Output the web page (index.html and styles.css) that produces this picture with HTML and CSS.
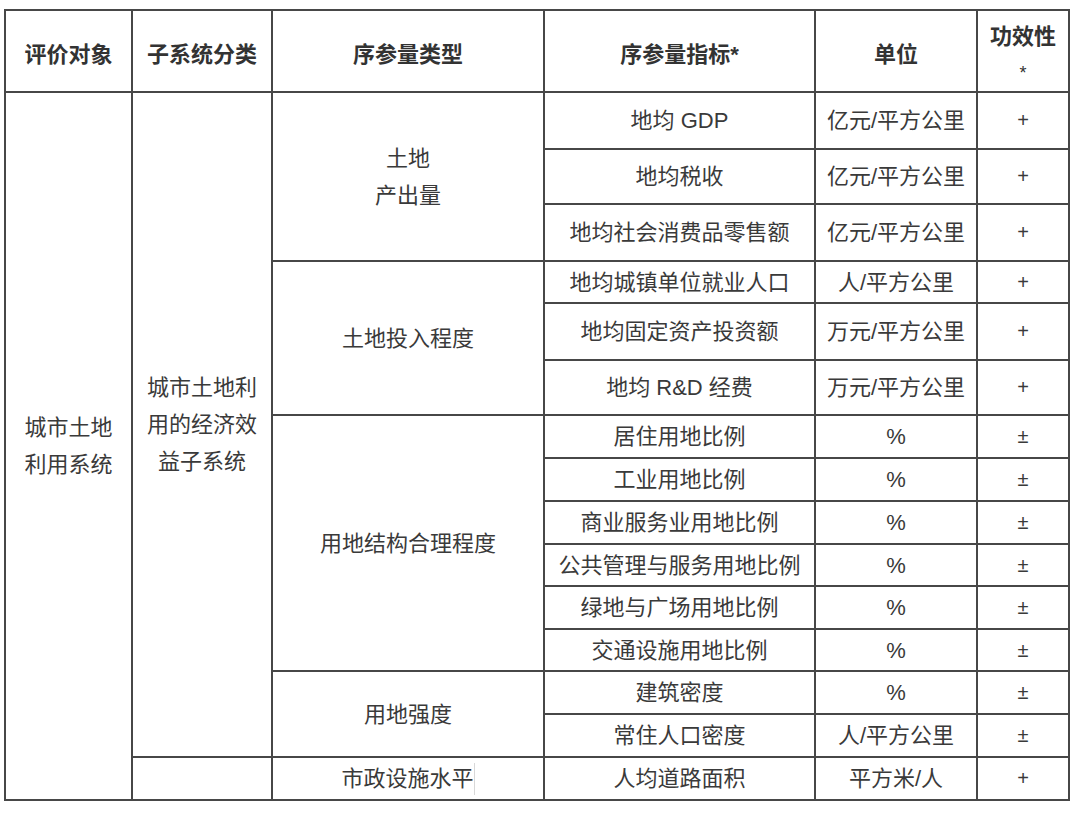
FILE: index.html
```html
<!DOCTYPE html>
<html lang="zh-CN">
<head>
<meta charset="utf-8">
<title>城市土地利用系统序参量</title>
<link rel="stylesheet" href="styles.css">
</head>
<body>
<table class="grid">
  <colgroup>
    <col class="c1"><col class="c2"><col class="c3"><col class="c4"><col class="c5"><col class="c6">
  </colgroup>
  <thead>
    <tr class="h82">
      <th>评价对象</th>
      <th>子系统分类</th>
      <th>序参量类型</th>
      <th>序参量指标*</th>
      <th>单位</th>
      <th>功效性<span class="star">*</span></th>
    </tr>
  </thead>
  <tbody>
    <tr class="h57">
      <td rowspan="15">城市土地利用系统</td>
      <td rowspan="14">城市土地利用的经济效益子系统</td>
      <td rowspan="3">土地<br>产出量</td>
      <td>地均 GDP</td>
      <td>亿元/平方公里</td>
      <td class="sign">+</td>
    </tr>
    <tr class="h55">
      <td>地均税收</td>
      <td>亿元/平方公里</td>
      <td class="sign">+</td>
    </tr>
    <tr class="h57">
      <td>地均社会消费品零售额</td>
      <td>亿元/平方公里</td>
      <td class="sign">+</td>
    </tr>
    <tr class="h42">
      <td rowspan="3">土地投入程度</td>
      <td>地均城镇单位就业人口</td>
      <td>人/平方公里</td>
      <td class="sign">+</td>
    </tr>
    <tr class="h57">
      <td>地均固定资产投资额</td>
      <td>万元/平方公里</td>
      <td class="sign">+</td>
    </tr>
    <tr class="h55">
      <td>地均 R&amp;D 经费</td>
      <td>万元/平方公里</td>
      <td class="sign">+</td>
    </tr>
    <tr class="h43">
      <td rowspan="6">用地结构合理程度</td>
      <td>居住用地比例</td>
      <td>%</td>
      <td class="sign">±</td>
    </tr>
    <tr class="h43">
      <td>工业用地比例</td>
      <td>%</td>
      <td class="sign">±</td>
    </tr>
    <tr class="h43">
      <td>商业服务业用地比例</td>
      <td>%</td>
      <td class="sign">±</td>
    </tr>
    <tr class="h42">
      <td>公共管理与服务用地比例</td>
      <td>%</td>
      <td class="sign">±</td>
    </tr>
    <tr class="h43">
      <td>绿地与广场用地比例</td>
      <td>%</td>
      <td class="sign">±</td>
    </tr>
    <tr class="h42">
      <td>交通设施用地比例</td>
      <td>%</td>
      <td class="sign">±</td>
    </tr>
    <tr class="h43">
      <td rowspan="2">用地强度</td>
      <td>建筑密度</td>
      <td>%</td>
      <td class="sign">±</td>
    </tr>
    <tr class="h43">
      <td>常住人口密度</td>
      <td>人/平方公里</td>
      <td class="sign">±</td>
    </tr>
    <tr class="h43">
      <td></td>
      <td><span class="mark">市政设施水平</span></td>
      <td>人均道路面积</td>
      <td>平方米/人</td>
      <td class="sign">+</td>
    </tr>
  </tbody>
</table>
</body>
</html>
```

FILE: styles.css
```css
html, body {
  margin: 0;
  padding: 0;
  background: #ffffff;
}

body {
  font-family: "Liberation Sans", "Noto Sans CJK SC", sans-serif;
  color: #3a3a3a;
}

.grid {
  border-collapse: collapse;
  table-layout: fixed;
  width: 1064px;
  margin: 9px 0 0 4px;
  border: 2px solid #474747;
}

.c1 { width: 127px; }
.c2 { width: 140px; }
.c3 { width: 272px; }
.c4 { width: 271px; }
.c5 { width: 162px; }
.c6 { width: 92px; }

.grid th,
.grid td {
  border: 2px solid #474747;
  padding: 0 10px;
  text-align: center;
  vertical-align: middle;
  font-size: 22px;
  line-height: 37px;
  font-weight: normal;
}

.grid th {
  font-weight: bold;
  color: #333333;
  line-height: 35px;
  padding-top: 7px;
}

.star {
  font-weight: normal;
  font-size: 18px;
}

.grid td.sign {
  font-size: 20px;
}

.mark {
  display: inline-block;
  border-right: 1px solid #d8d8d8;
  line-height: 32px;
}

.h82 { height: 82px; }
.h57 { height: 57px; }
.h55 { height: 55px; }
.h43 { height: 43px; }
.h42 { height: 42px; }
```
